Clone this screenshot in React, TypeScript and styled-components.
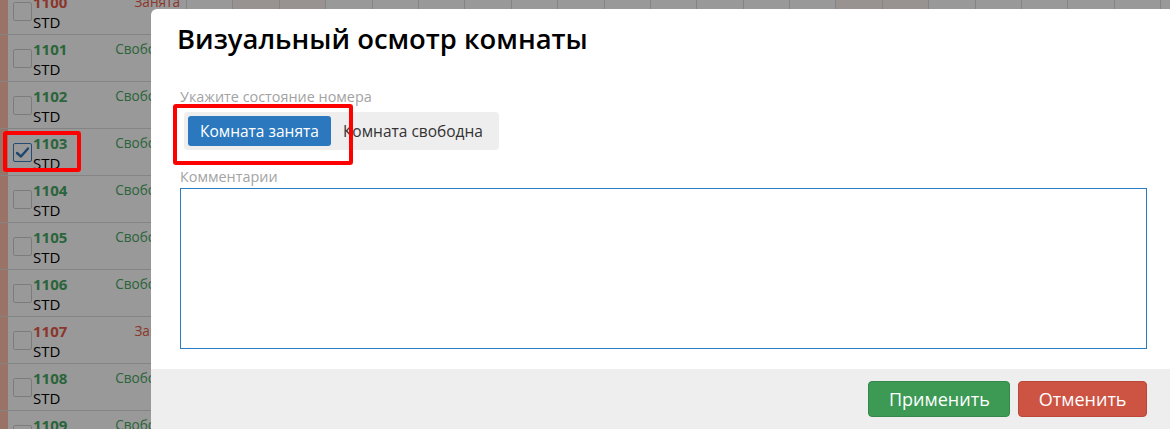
import React from "react";
import styled, { createGlobalStyle } from "styled-components";

const GlobalStyle = createGlobalStyle`
  html, body {
    margin: 0;
    padding: 0;
    overflow: hidden;
    background: #fff;
    font-family: "Open Sans", "Liberation Sans", sans-serif;
  }
`;

type Room = { num: string; busy: boolean; checked?: boolean };

const rooms: Room[] = [
  { num: "1100", busy: true },
  { num: "1101", busy: false },
  { num: "1102", busy: false },
  { num: "1103", busy: false, checked: true },
  { num: "1104", busy: false },
  { num: "1105", busy: false },
  { num: "1106", busy: false },
  { num: "1107", busy: true },
  { num: "1108", busy: false },
  { num: "1109", busy: false },
];

const pinkDays = [1, 2, 14, 15];

const Grid = styled.div`
  margin-top: -12px;
  width: 1200px;
  height: 441px;
  overflow: hidden;
`;

const Row = styled.div`
  display: flex;
  height: 46px;
  border-bottom: 1px solid #dcdcdc;
`;

const RoomCell = styled.div`
  display: flex;
  width: 187px;
  flex: none;
  border-right: 1px solid #dcdcdc;
  box-sizing: border-box;
`;

const Strip = styled.div`
  width: 8px;
  flex: none;
  background: #ffc2aa;
`;

const CheckCol = styled.div`
  width: 25px;
  display: flex;
  align-items: center;
  justify-content: center;
  flex: none;
`;

const Box = styled.div<{ $checked?: boolean }>`
  width: 19px;
  height: 19px;
  box-sizing: border-box;
  border: 1px solid ${(p) => (p.$checked ? "#3a7fc0" : "#cfcfcf")};
  border-radius: 2px;
  background: #fff;
  display: flex;
  align-items: center;
  justify-content: center;
  margin-left: 3px;
`;

const Info = styled.div`
  padding-top: 4px;
  flex: 1;
  line-height: 20px;
  font-size: 15px;
  color: #000;
`;

const Num = styled.div<{ $busy: boolean }>`
  font-weight: 700;
  color: ${(p) => (p.$busy ? "#e85a48" : "#47a863")};
`;

const Status = styled.div<{ $busy: boolean }>`
  padding-top: 4px;
  padding-right: 6px;
  line-height: 20px;
  font-size: 13.6px;
  color: ${(p) => (p.$busy ? "#e85a48" : "#47a863")};
`;

const Days = styled.div`
  display: flex;
  flex: 1;
`;

const Day = styled.div<{ $pink?: boolean }>`
  width: 46.4px;
  flex: none;
  box-sizing: border-box;
  border-right: 1px solid #dcdcdc;
  background: ${(p) => (p.$pink ? "#fdf3f2" : "#fff")};
`;

const Overlay = styled.div`
  position: fixed;
  inset: 0;
  background: rgba(0, 0, 0, 0.4);
`;

const Modal = styled.div`
  position: fixed;
  left: 151px;
  top: 9px;
  width: 1019px;
  background: #fff;
  border-radius: 6px 0 0 0;
  display: flex;
  flex-direction: column;
`;

const Title = styled.h2`
  margin: 0;
  padding: 11px 0 0 26px;
  font-size: 27.4px;
  line-height: 38px;
  font-weight: 600;
  color: #000;
`;

const Body = styled.div`
  padding: 29px 23px 20px 29px;
  display: flex;
  flex-direction: column;
`;

const Label = styled.div`
  font-size: 14.4px;
  line-height: 20px;
  color: #a3a3a3;
`;

const Segmented = styled.div`
  align-self: flex-start;
  display: flex;
  align-items: center;
  margin: 5px 0 17px 4px;
  padding: 4px;
  background: #eeeeee;
  border-radius: 4px;
`;

const SegButton = styled.button<{ $active?: boolean }>`
  height: 30px;
  padding: 0 12px;
  border: none;
  border-radius: 3px;
  font-family: inherit;
  font-size: 15.5px;
  background: ${(p) => (p.$active ? "#2b78be" : "transparent")};
  color: ${(p) => (p.$active ? "#fff" : "#333")};
  cursor: pointer;
`;

const TextArea = styled.textarea`
  margin-top: 1px;
  height: 161px;
  box-sizing: border-box;
  border: 1px solid #2a7bc1;
  border-radius: 0;
  outline: none;
  resize: none;
  font-family: inherit;
  font-size: 15px;
`;

const Footer = styled.div`
  background: #eeeeee;
  display: flex;
  justify-content: flex-end;
  gap: 8px;
  padding: 12px 23px 14px;
`;

const ActionButton = styled.button<{ $tone: "ok" | "cancel" }>`
  height: 36px;
  padding: 0 19.5px;
  border-radius: 4px;
  font-family: inherit;
  font-size: 18px;
  color: #fff;
  background: ${(p) => (p.$tone === "ok" ? "#3d9a55" : "#cd5443")};
  border: 1px solid ${(p) => (p.$tone === "ok" ? "#34884a" : "#b94839")};
  cursor: pointer;
`;

const Mark = styled.div`
  position: fixed;
  border: 4px solid #ff0000;
  border-radius: 3px;
  box-sizing: border-box;
  pointer-events: none;
`;

const Check = () => (
  <svg width="15" height="13" viewBox="0 0 15 13">
    <path d="M2 7 L6 10.5 L13 2.5" fill="none" stroke="#3275b7" strokeWidth="2.4" strokeLinecap="round" strokeLinejoin="round" />
  </svg>
);

const App = () => {
  return (
    <>
      <GlobalStyle />
      <Grid>
        {rooms.map((r, i) => (
          <Row key={r.num}>
            <RoomCell>
              <Strip />
              <CheckCol>
                <Box $checked={r.checked}>{r.checked && <Check />}</Box>
              </CheckCol>
              <Info>
                <Num $busy={r.busy}>{r.num}</Num>
                <div>STD</div>
              </Info>
              <Status $busy={r.busy}>{r.busy ? "Занята" : "Свободна"}</Status>
            </RoomCell>
            <Days>
              {Array.from({ length: 22 }).map((_, d) => (
                <Day key={d} $pink={i === 0 && pinkDays.includes(d)} />
              ))}
            </Days>
          </Row>
        ))}
      </Grid>
      <Overlay />
      <Modal>
        <Title>Визуальный осмотр комнаты</Title>
        <Body>
          <Label>Укажите состояние номера</Label>
          <Segmented>
            <SegButton $active>Комната занята</SegButton>
            <SegButton>Комната свободна</SegButton>
          </Segmented>
          <Label>Комментарии</Label>
          <TextArea />
        </Body>
        <Footer>
          <ActionButton $tone="ok">Применить</ActionButton>
          <ActionButton $tone="cancel">Отменить</ActionButton>
        </Footer>
      </Modal>
      <Mark style={{ left: 3, top: 131, width: 78, height: 41 }} />
      <Mark style={{ left: 173, top: 104, width: 180, height: 61 }} />
    </>
  );
};

export default App;
